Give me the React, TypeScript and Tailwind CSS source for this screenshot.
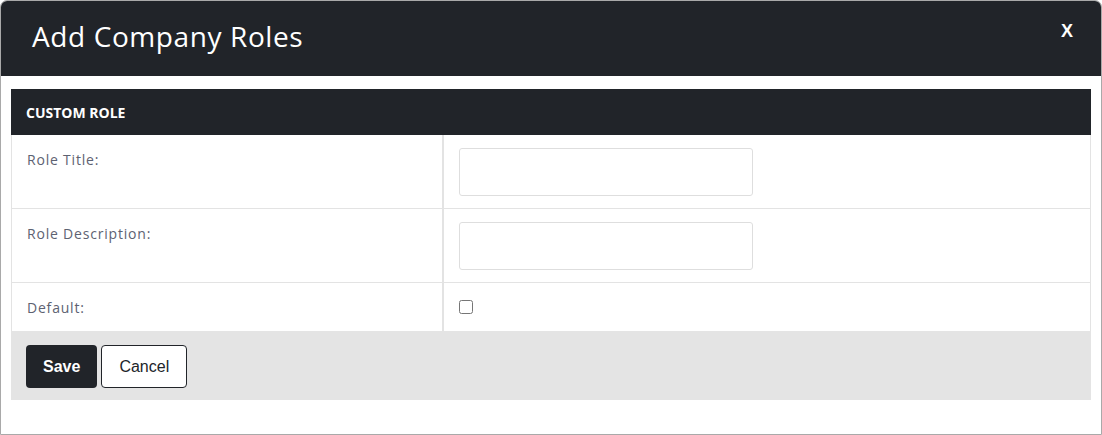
const rows = [
  { label: "Role Title:" },
  { label: "Role Description:" },
];

export default function App() {
  return (
    <div className="h-[435px] w-[1102px] overflow-hidden rounded-t-[7px] border border-[#a9a9a9] bg-white font-['Open_Sans',sans-serif]">
      {/* Modal header */}
      <div className="flex h-[75px] items-start justify-between bg-[#212429] pl-[31px] pr-[28px]">
        <h1 className="mt-[17px] text-[28px] leading-[36px] tracking-[0.6px] text-white">Add Company Roles</h1>
        <button className="mt-[17px] font-['Liberation_Sans',sans-serif] text-[18px] font-bold text-white">X</button>
      </div>

      <div className="px-[10px] pt-[13px]">
        {/* Section title */}
        <div className="flex h-[46px] items-center bg-[#212429] px-[15px]">
          <span className="text-[14px] font-bold text-white">CUSTOM ROLE</span>
        </div>

        <div className="border-x border-[#e3e3e3]">
          {rows.map((r) => (
            <div key={r.label} className="grid grid-cols-[432px_1fr] border-b-[1.5px] border-[#e3e3e3]">
              <div className="border-r-2 border-[#e3e3e3] px-[15px] pt-[14px] text-[14px] tracking-[0.8px] text-[#5d6272]">{r.label}</div>
              <div className="px-[15px] pt-[13px] pb-[12px]">
                <input className="block h-[48px] w-[294px] rounded-[3px] border border-[#dedede] bg-white" />
              </div>
            </div>
          ))}
          <div className="grid h-[48px] grid-cols-[432px_1fr]">
            <div className="flex items-center border-r-2 border-[#e3e3e3] px-[15px] text-[14px] tracking-[0.8px] text-[#5d6272]">Default:</div>
            <div className="flex items-center px-[15px]">
              <input type="checkbox" className="m-0 h-[14px] w-[14px]" />
            </div>
          </div>
        </div>

        {/* Footer */}
        <div className="flex h-[69px] items-start gap-[4px] bg-[#e4e4e4] px-[15px] pt-[14px]">
          <button className="h-[43px] rounded-[4px] bg-[#212429] px-[17px] font-['Liberation_Sans',sans-serif] text-[16px] font-bold text-white">Save</button>
          <button className="h-[43px] rounded-[4px] border border-[#212429] bg-white px-[17px] font-['Liberation_Sans',sans-serif] text-[16px] text-[#212429]">Cancel</button>
        </div>
      </div>
    </div>
  );
}
